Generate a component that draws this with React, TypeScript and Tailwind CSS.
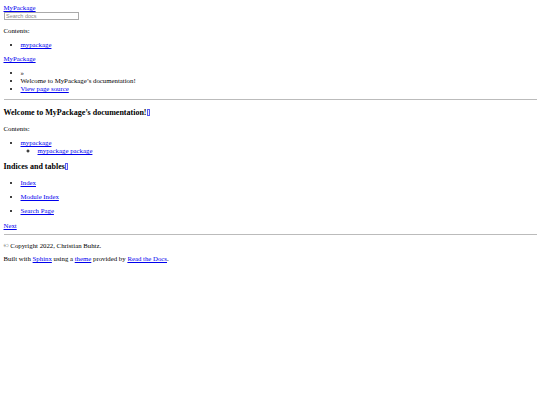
import * as React from 'react'

const link = 'text-[#0000ee] underline'

function HeaderLink() {
  return (
    <a className={`${link} inline-block align-[-1px] ml-[0.5px] w-[3px] h-[7px] border-[0.5px] border-[#5a5aee] bg-[#eeeeff] border-b-[1px]`} href="#" />
  )
}

export default function App() {
  return (
    <div className="min-h-[405px] bg-white text-black font-['Liberation_Serif',serif] text-[6.8px] leading-[8px] px-[3.5px] pt-[4px]">
      {/* Nav side */}
      <div>
        <a className={link} href="#">MyPackage</a>
      </div>
      <input
        className="block w-[75px] h-[8px] border border-[#aaa] px-[1.5px] text-[5.5px] font-['Liberation_Sans',sans-serif] placeholder:text-[#888]"
        placeholder="Search docs"
      />
      <p className="mt-[7px]">Contents:</p>
      <ul className="list-disc pl-[17px] mt-[6px]">
        <li><a className={link} href="#">mypackage</a></li>
      </ul>
      <div className="mt-[6px]">
        <a className={link} href="#">MyPackage</a>
      </div>

      {/* Breadcrumbs */}
      <ul className="list-disc pl-[17px] mt-[6px]">
        <li>»</li>
        <li>Welcome to MyPackage’s documentation!</li>
        <li><a className={link} href="#">View page source</a></li>
      </ul>
      <hr className="mt-[6px] border-0 border-t border-[#bbb]" />

      {/* Content */}
      <h1 className="mt-[8px] font-bold text-[8px] leading-[10px]">
        Welcome to MyPackage’s documentation!<HeaderLink />
      </h1>
      <p className="mt-[7px]">Contents:</p>
      <ul className="list-disc pl-[17px] mt-[6px]">
        <li>
          <a className={link} href="#">mypackage</a>
          <ul className="list-[circle] pl-[17px]">
            <li className="list-[circle]"><a className={link} href="#">mypackage package</a></li>
          </ul>
        </li>
      </ul>
      <h2 className="mt-[7px] font-bold text-[8px] leading-[10px]">
        Indices and tables<HeaderLink />
      </h2>
      <ul className="list-disc pl-[17px] mt-[7px] flex flex-col gap-[6px]">
        <li><a className={link} href="#">Index</a></li>
        <li><a className={link} href="#">Module Index</a></li>
        <li><a className={link} href="#">Search Page</a></li>
      </ul>

      {/* Footer */}
      <div className="mt-[7px]">
        <a className={link} href="#">Next</a>
      </div>
      <hr className="mt-[4px] border-0 border-t border-[#bbb]" />
      <p className="mt-[7px]">© Copyright 2022, Christian Buhtz.</p>
      <p className="mt-[5px]">
        Built with <a className={link} href="#">Sphinx</a> using a <a className={link} href="#">theme</a> provided by{' '}
        <a className={link} href="#">Read the Docs</a>.
      </p>
    </div>
  )
}
